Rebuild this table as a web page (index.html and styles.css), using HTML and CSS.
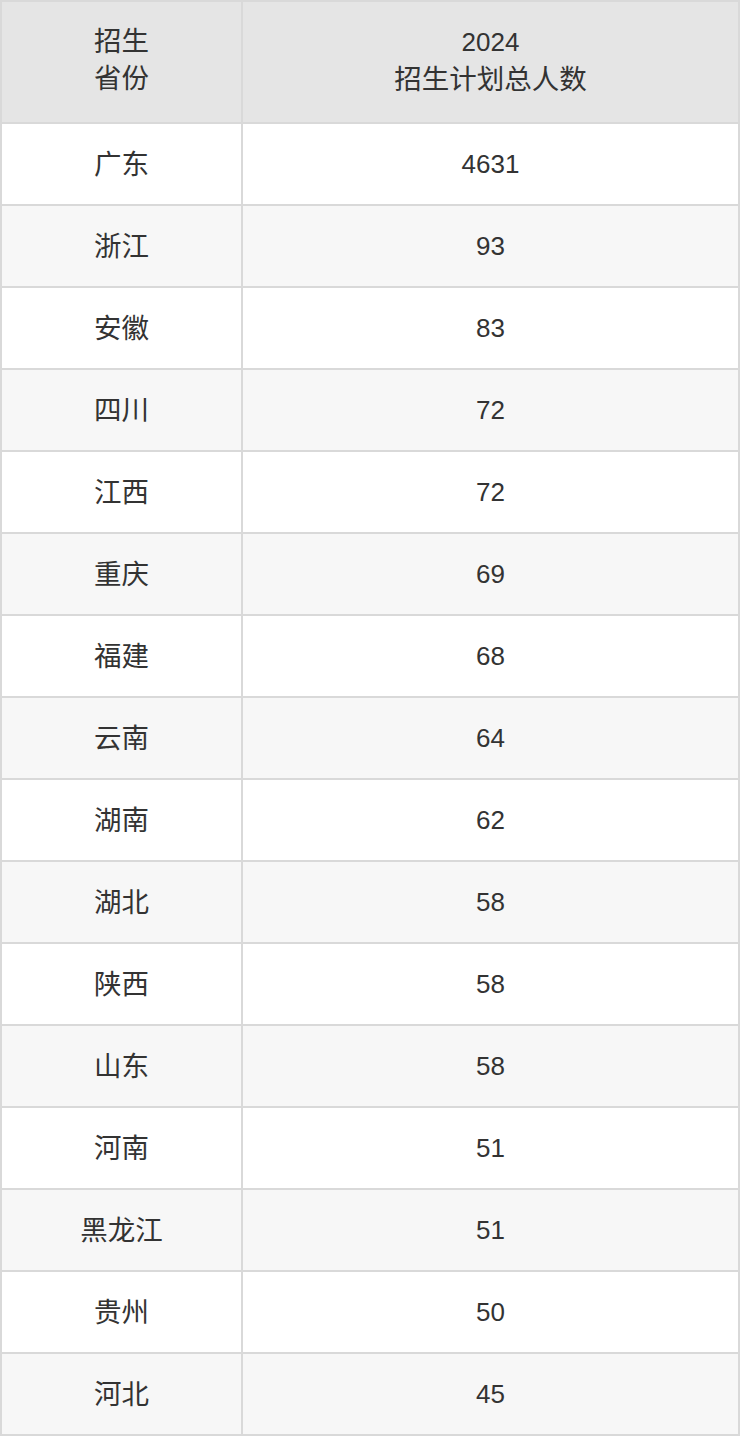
FILE: index.html
```html
<!DOCTYPE html>
<html lang="zh">
<head>
<meta charset="utf-8">
<link rel="stylesheet" href="styles.css">
</head>
<body>
<div class="table">
  <div class="cell head">招生<br>省份</div>
  <div class="cell head"><span class="num">2024</span><br>招生计划总人数</div>
  <div class="cell">广东</div><div class="cell num">4631</div>
  <div class="cell alt">浙江</div><div class="cell alt num">93</div>
  <div class="cell">安徽</div><div class="cell num">83</div>
  <div class="cell alt">四川</div><div class="cell alt num">72</div>
  <div class="cell">江西</div><div class="cell num">72</div>
  <div class="cell alt">重庆</div><div class="cell alt num">69</div>
  <div class="cell">福建</div><div class="cell num">68</div>
  <div class="cell alt">云南</div><div class="cell alt num">64</div>
  <div class="cell">湖南</div><div class="cell num">62</div>
  <div class="cell alt">湖北</div><div class="cell alt num">58</div>
  <div class="cell">陕西</div><div class="cell num">58</div>
  <div class="cell alt">山东</div><div class="cell alt num">58</div>
  <div class="cell">河南</div><div class="cell num">51</div>
  <div class="cell alt">黑龙江</div><div class="cell alt num">51</div>
  <div class="cell">贵州</div><div class="cell num">50</div>
  <div class="cell alt">河北</div><div class="cell alt num">45</div>
</div>
</body>
</html>
```
FILE: styles.css
```css
html, body {
  margin: 0;
  padding: 0;
  background: #ffffff;
}
.table {
  display: grid;
  grid-template-columns: 239px 495px;
  grid-template-rows: 120px;
  grid-auto-rows: 80px;
  gap: 2px;
  padding: 2px;
  width: 740px;
  box-sizing: border-box;
  background: #d9d9d9;
  font-family: "Liberation Sans", "Noto Sans CJK SC", sans-serif;
  font-size: 27.5px;
  color: #333333;
}
.cell {
  display: flex;
  align-items: center;
  justify-content: center;
  text-align: center;
  background: #ffffff;
  line-height: 37px;
}
.cell.head {
  display: block;
  padding-top: 21px;
  box-sizing: border-box;
}
.num {
  font-size: 26px;
}
.cell.alt {
  background: #f7f7f7;
}
.cell.head {
  background: #e5e5e5;
}
```
